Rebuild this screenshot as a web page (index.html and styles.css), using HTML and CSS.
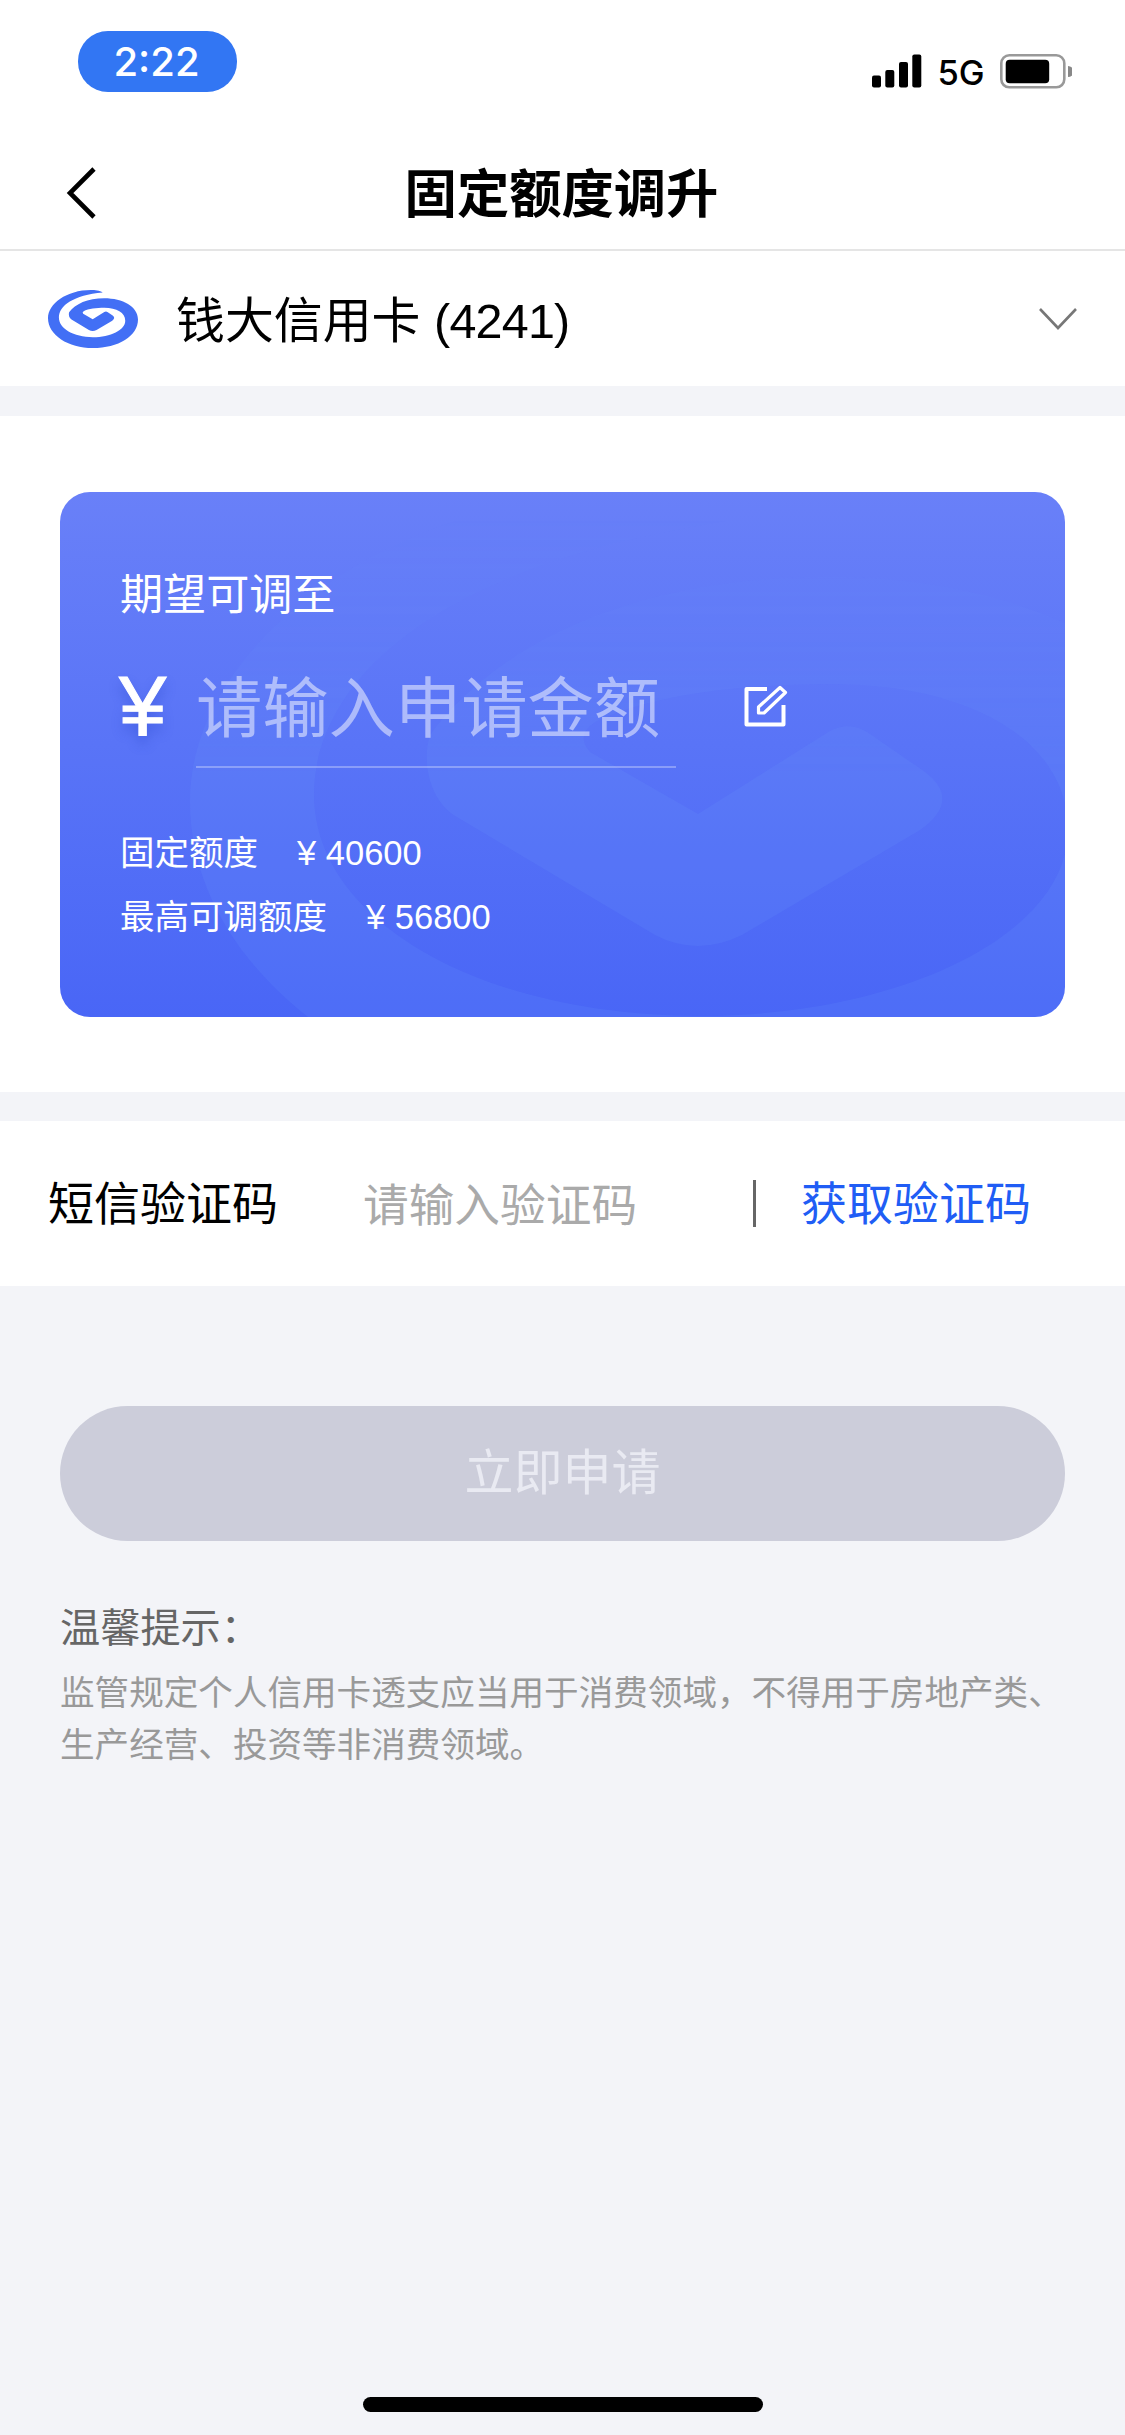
FILE: index.html
```html
<!DOCTYPE html>
<html lang="zh-CN">
<head>
<meta charset="utf-8">
<title>固定额度调升</title>
<link rel="stylesheet" href="styles.css">
</head>
<body>
<svg class="defs" width="0" height="0" aria-hidden="true">
  <symbol id="swirl" viewBox="190 484 1023 653" preserveAspectRatio="none">
    <path d="M812 512C780 488 720 484 680 484C400 484 190 640 190 801C190 990 420 1137 700 1137C990 1137 1213 1000 1213 815C1213 670 1040 577 829 577C640 577 500 640 430 735C422 760 428 800 457 817L655 935Q697 957 742 935L920 830Q962 800 925 772L870 734Q851 720 830 731L698 814L590 752Q575 735 595 722C650 695 740 684 830 684C970 684 1068 740 1068 830C1068 935 900 1016 700 1016C480 1016 314 920 314 795C314 660 480 540 812 512Z"/>
  </symbol>
</svg>
<div class="screen">
  <header class="status">
    <span class="clock">2:22</span>
    <div class="indicators">
      <svg class="signal" viewBox="0 0 50 34"><rect x="0" y="21.5" width="9" height="12" rx="2"/><rect x="13.3" y="16" width="9" height="17.500" rx="2"/><rect x="27" y="8" width="9" height="25.500" rx="2"/><rect x="40.300" y="0.500" width="9" height="33" rx="2"/></svg>
      <span class="network">5G</span>
      <svg class="battery" viewBox="0 0 72 35"><rect x="1.300" y="1.300" width="63" height="32" rx="8" fill="none" stroke="#999" stroke-width="2.600"/><rect x="5.700" y="5.700" width="43.500" height="23.600" rx="4"/><path d="M68 12a5.500 5.500 0 0 1 0 11z" fill="#888"/></svg>
    </div>
  </header>
  <nav class="navbar">
    <svg class="back" viewBox="0 0 30 52"><path d="M28 2L4 26L28 50" fill="none" stroke="#000" stroke-width="4.600"/></svg>
    <h1 class="title">固定额度调升</h1>
  </nav>
  <section class="account">
    <svg class="logo"><use href="#swirl"/></svg>
    <span class="account-name">钱大信用卡 <span class="digits">(4241)</span></span>
    <svg class="chevron" viewBox="0 0 38 22"><path d="M1 1L19 20L37 1" fill="none" stroke="#777" stroke-width="2.600"/></svg>
  </section>
  <section class="quota">
    <div class="card">
      <svg class="watermark"><use href="#swirl"/></svg>
      <div class="card-label">期望可调至</div>
      <div class="amount">
        <span class="yen">¥</span>
        <span class="amount-input">请输入申请金额</span>
        <svg class="edit" viewBox="0 0 44 42"><path d="M23 4H2.500V39.500H39.500V20" fill="none" stroke="#fff" stroke-width="4" stroke-linejoin="round"/><path d="M14.500 28V22L36 2.500L41.500 7.500L20 28Z" fill="none" stroke="#fff" stroke-width="3.200" stroke-linejoin="round"/></svg>
      </div>
      <div class="limit"><span>固定额度</span><span>¥ 40600</span></div>
      <div class="limit"><span>最高可调额度</span><span>¥ 56800</span></div>
    </div>
  </section>
  <section class="sms">
    <span class="sms-label">短信验证码</span>
    <span class="sms-input">请输入验证码</span>
    <span class="divider"></span>
    <span class="sms-send">获取验证码</span>
  </section>
  <main class="content">
    <div class="submit">立即申请</div>
    <div class="tips">
      <h2 class="tips-title">温馨提示：</h2>
      <p class="tips-text">监管规定个人信用卡透支应当用于消费领域，不得用于房地产类、<br>生产经营、投资等非消费领域。</p>
    </div>
  </main>
  <div class="home"></div>
</div>
</body>
</html>
```
FILE: styles.css
```css
* { box-sizing: border-box; margin: 0; padding: 0; }
body { background: #f3f4f8; color: #000; font-family: "Liberation Sans", "Noto Sans CJK SC", sans-serif; }
svg { display: block; flex: none; }
.defs { position: absolute; }
.screen { width: 1125px; height: 2435px; display: flex; flex-direction: column; overflow: hidden; white-space: nowrap; }
.status { height: 136px; padding: 31px 53px 0 78px; display: flex; justify-content: space-between; align-items: flex-start; background: #fff; }
.clock { width: 159px; height: 61px; padding-right: 2px; border-radius: 30px; background: #3276f3; color: #fff; font: 500 40px/61px Inter, sans-serif; text-align: center; }
.indicators { display: flex; align-items: center; padding-top: 22px; height: 58px; }
.signal { width: 50px; height: 34px; }
.network { width: 78px; padding-top: 3px; text-align: center; font: 500 34.500px/36px Inter, sans-serif; }
.battery { width: 72px; height: 35px; }
.navbar { height: 115px; padding-left: 66px; display: grid; grid-template-columns: 30px 1fr 96px; align-items: center; background: #fff; border-bottom: 2px solid #e5e5e5; }
.back { width: 30px; height: 52px; }
.title { padding: 4px 2px 0 0; font-size: 52.300px; line-height: 60px; font-weight: 600; text-align: center; }
.account { height: 135px; padding: 0 48px; display: flex; align-items: center; background: #fff; }
.logo { width: 90px; height: 58px; fill: #426ff5; }
.account-name { flex: 1; margin-left: 38px; padding-top: 5px; font-size: 48.900px; line-height: 60px; }
.digits { font-size: 48.500px; letter-spacing: -.800px; }
.chevron { width: 38px; height: 22px; }
.quota { margin-top: 30px; height: 676px; padding: 76px 60px 0; background: #fff; }
.card { position: relative; height: 525px; border-radius: 30px; padding: 75px 60px 0; overflow: hidden; color: #fff; background: linear-gradient(#6980f8, #5974f7 48%, #4966f6); }
.watermark { position: absolute; left: 130px; top: -8px; width: 1023px; height: 653px; fill: rgba(120, 175, 255, .11); -webkit-mask-image: linear-gradient(transparent 5%, #000 45%); mask-image: linear-gradient(transparent 5%, #000 45%); }
.card > div { position: relative; }
.card-label { font-size: 43.100px; line-height: 56px; }
.amount { height: 145px; margin-bottom: 54px; display: flex; align-items: flex-start; }
.yen { width: 76px; font-size: 85px; line-height: 168px; text-indent: -1px; -webkit-text-stroke: 1px #fff; text-shadow: 0 8px 12px rgba(40, 70, 200, .4); }
.amount-input { width: 480px; height: 145px; font-size: 66.300px; line-height: 173px; color: rgba(255, 255, 255, .5); border-bottom: 2px solid rgba(255, 255, 255, .3); }
.edit { width: 44px; height: 42px; margin: 62px 0 0 68px; }
.limit { display: flex; gap: 39px; font-size: 34.500px; line-height: 63.600px; }
.sms { margin-top: 29px; height: 165px; padding-left: 48px; display: flex; align-items: center; background: #fff; font-size: 46px; line-height: 60px; }
.sms-label { width: 315px; }
.sms-input { width: 390px; padding-top: 6px; font-size: 45.700px; color: #aaa; }
.divider { width: 3px; height: 47px; background: #666; }
.sms-send { margin-left: 45px; color: #205df5; }
.content { flex: 1; padding: 120px 60px 0; }
.submit { height: 135px; border-radius: 68px; background: #cccdda; color: #e9eaf2; text-align: center; font-size: 49px; line-height: 135px; }
.tips { padding-top: 60px; }
.tips-title { font-size: 40.200px; line-height: 56px; font-weight: 400; color: #666; }
.tips-text { margin-top: 10px; font-size: 34.600px; line-height: 52px; color: #999; }
.home { width: 400px; height: 15px; margin: 0 auto 23px; border-radius: 8px; background: #000; }
```
